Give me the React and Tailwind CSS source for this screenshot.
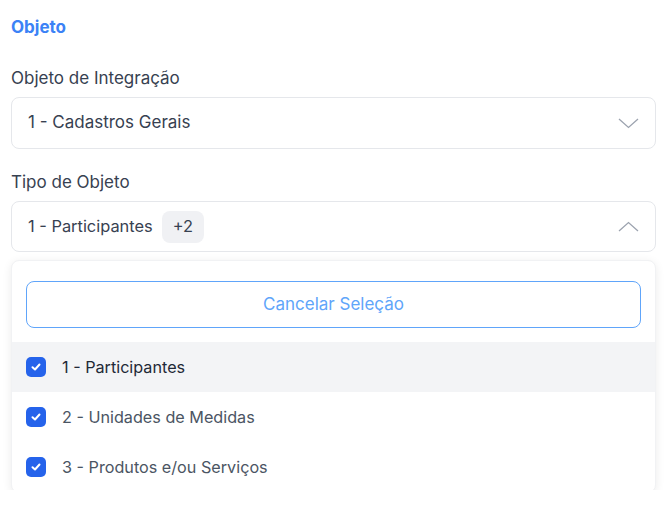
import React from 'react';

const font = { fontFamily: 'Inter, "Noto Sans", sans-serif' };

const Chevron = ({ up }) => (
  <svg width="21" height="11" viewBox="0 0 21 11" fill="none" className="shrink-0">
    <path
      d={up ? 'M1 10 L10.5 1.5 L20 10' : 'M1 1 L10.5 9.5 L20 1'}
      stroke="#9ca3af"
      strokeWidth="1.3"
    />
  </svg>
);

const Check = () => (
  <div className="w-5 h-5 rounded-[5px] bg-[#2563eb] flex items-center justify-center shrink-0">
    <svg width="12" height="12" viewBox="0 0 12 12" fill="none">
      <path d="M2.5 6.2 L5 8.5 L9.5 3.5" stroke="white" strokeWidth="2" strokeLinecap="round" strokeLinejoin="round" />
    </svg>
  </div>
);

const options = [
  { label: '1 - Participantes', active: true },
  { label: '2 - Unidades de Medidas' },
  { label: '3 - Produtos e/ou Serviços' },
];

export default function App() {
  return (
    <div className="w-[664px] h-[490px] overflow-hidden bg-white" style={font}>
      <div className="pl-[11px] pr-[8px] pt-[15px]">
        <div className="text-[17px] leading-6 font-bold text-[#3b82f6]">Objeto</div>

        <div className="mt-[27px] text-[17px] leading-6 text-[#374151]">Objeto de Integração</div>
        <div className="mt-[7px] h-[52px] rounded-lg border border-[#e5e7eb] flex items-center justify-between pl-4 pr-4">
          <span className="text-[17px] text-[#374151]">1 - Cadastros Gerais</span>
          <Chevron />
        </div>

        <div className="mt-[21px] text-[17px] leading-6 text-[#374151]">Tipo de Objeto</div>
        <div className="mt-[7px] h-[51px] rounded-lg border border-[#e5e7eb] flex items-center justify-between pl-4 pr-4">
          <div className="flex items-center gap-[9px]">
            <span className="text-[16.4px] text-[#374151]">1 - Participantes</span>
            <span className="h-8 px-[11px] rounded-lg bg-[#f0f1f4] flex items-center text-[16.4px] text-[#374151]">+2</span>
          </div>
          <Chevron up />
        </div>

        <div className="mt-2 rounded-lg border border-[#f1f2f4] bg-white shadow-[0_2px_10px_rgba(0,0,0,0.08)] pt-5">
          <div className="px-[14px]">
            <button className="w-full h-[47px] rounded-lg border border-[#60a5fa] text-[17px] text-[#60a5fa] bg-white">
              Cancelar Seleção
            </button>
          </div>
          <div className="mt-[14px]">
            {options.map((o) => (
              <div
                key={o.label}
                className={`h-[50px] flex items-center gap-4 px-[14px] ${o.active ? 'bg-[#f3f4f6]' : ''}`}
              >
                <Check />
                <span className={`text-[16.2px] ${o.active ? 'text-[#1f2937]' : 'text-[#4b5563]'}`}>{o.label}</span>
              </div>
            ))}
          </div>
        </div>
      </div>
    </div>
  );
}
